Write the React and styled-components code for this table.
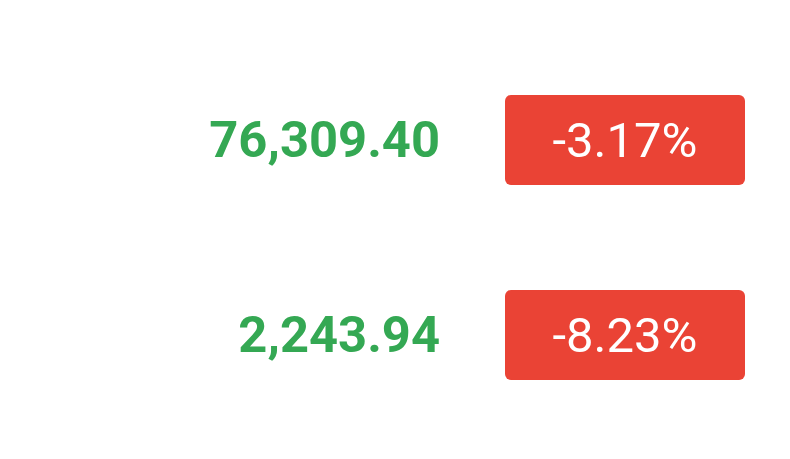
import React from 'react';
import styled, { createGlobalStyle } from 'styled-components';

const QUOTES = [
  { id: 1, price: '76,309.40', change: '-3.17%' },
  { id: 2, price: '2,243.94', change: '-8.23%' },
];

const App = () => {
  return (
    <>
      <GlobalStyle />
      <S.Board>
        {QUOTES.map(quote => (
          <S.Row key={quote.id}>
            <S.Price>{quote.price}</S.Price>
            <S.Change>{quote.change}</S.Change>
          </S.Row>
        ))}
      </S.Board>
    </>
  );
};
export default App;

const GlobalStyle = createGlobalStyle`
  body {
    margin: 0;
    background: #fff;
    font-family: Roboto, 'Liberation Sans', sans-serif;
  }
`;

const S = {
  Board: styled.main`
    display: flex;
    flex-direction: column;
    gap: 105px;
    width: 790px;
    height: 459px;
    padding-top: 95px;
    box-sizing: border-box;
  `,

  Row: styled.div`
    display: grid;
    grid-template-columns: 440px 240px;
    column-gap: 65px;
    align-items: center;
    height: 90px;
  `,

  Price: styled.span`
    color: #34a853;
    font-size: 50.7px;
    font-weight: 700;
    text-align: right;
    line-height: 90px;
  `,

  Change: styled.span`
    display: flex;
    align-items: center;
    justify-content: center;
    height: 90px;
    border-radius: 6px;
    background-color: #ea4335;
    color: #fff;
    font-size: 49px;
    font-weight: 400;
  `,
};
